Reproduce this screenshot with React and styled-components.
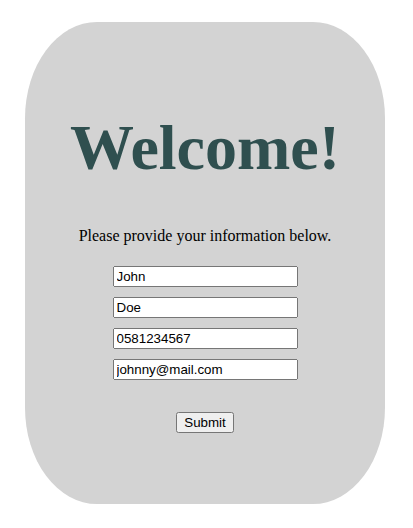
import React from 'react';
import styled, { createGlobalStyle } from 'styled-components';

const GlobalStyle = createGlobalStyle`
  body {
    margin: 0;
    background: #ffffff;
    font-family: "Liberation Serif", "Times New Roman", serif;
  }
`;

const Page = styled.div`
  padding: 22px 0 24px 25px;
`;

const Card = styled.form`
  display: flex;
  flex-direction: column;
  align-items: center;
  box-sizing: border-box;
  width: 360px;
  height: 482px;
  padding-top: 89px;
  background: #d3d3d3;
  border-radius: 20%;
`;

const Title = styled.h1`
  margin: 0;
  font-family: "Liberation Serif", "Times New Roman", serif;
  font-size: 64px;
  font-weight: 700;
  color: #2f4f4f;
`;

const Intro = styled.p`
  margin: 42px 0 21px;
  font-size: 16px;
  color: #000000;
`;

const Fields = styled.div`
  display: flex;
  flex-direction: column;
  gap: 10px;
`;

const Field = styled.input`
  box-sizing: border-box;
  width: 185px;
  height: 21px;
  font-family: "Liberation Sans", Arial, sans-serif;
  font-size: 13.333px;
`;

const SubmitButton = styled.button`
  margin-top: 32px;
  font-family: "Liberation Sans", Arial, sans-serif;
  font-size: 13.333px;
`;

const fields = [
  { name: 'firstName', value: 'John' },
  { name: 'lastName', value: 'Doe' },
  { name: 'phone', value: '0581234567' },
  { name: 'email', value: 'johnny@mail.com' },
];

export default function App() {
  return (
    <>
      <GlobalStyle />
      <Page>
        <Card onSubmit={(e) => e.preventDefault()}>
          <Title>Welcome!</Title>
          <Intro>Please provide your information below.</Intro>
          <Fields>
            {fields.map((f) => (
              <Field key={f.name} name={f.name} type="text" defaultValue={f.value} />
            ))}
          </Fields>
          <SubmitButton type="submit">Submit</SubmitButton>
        </Card>
      </Page>
    </>
  );
}
